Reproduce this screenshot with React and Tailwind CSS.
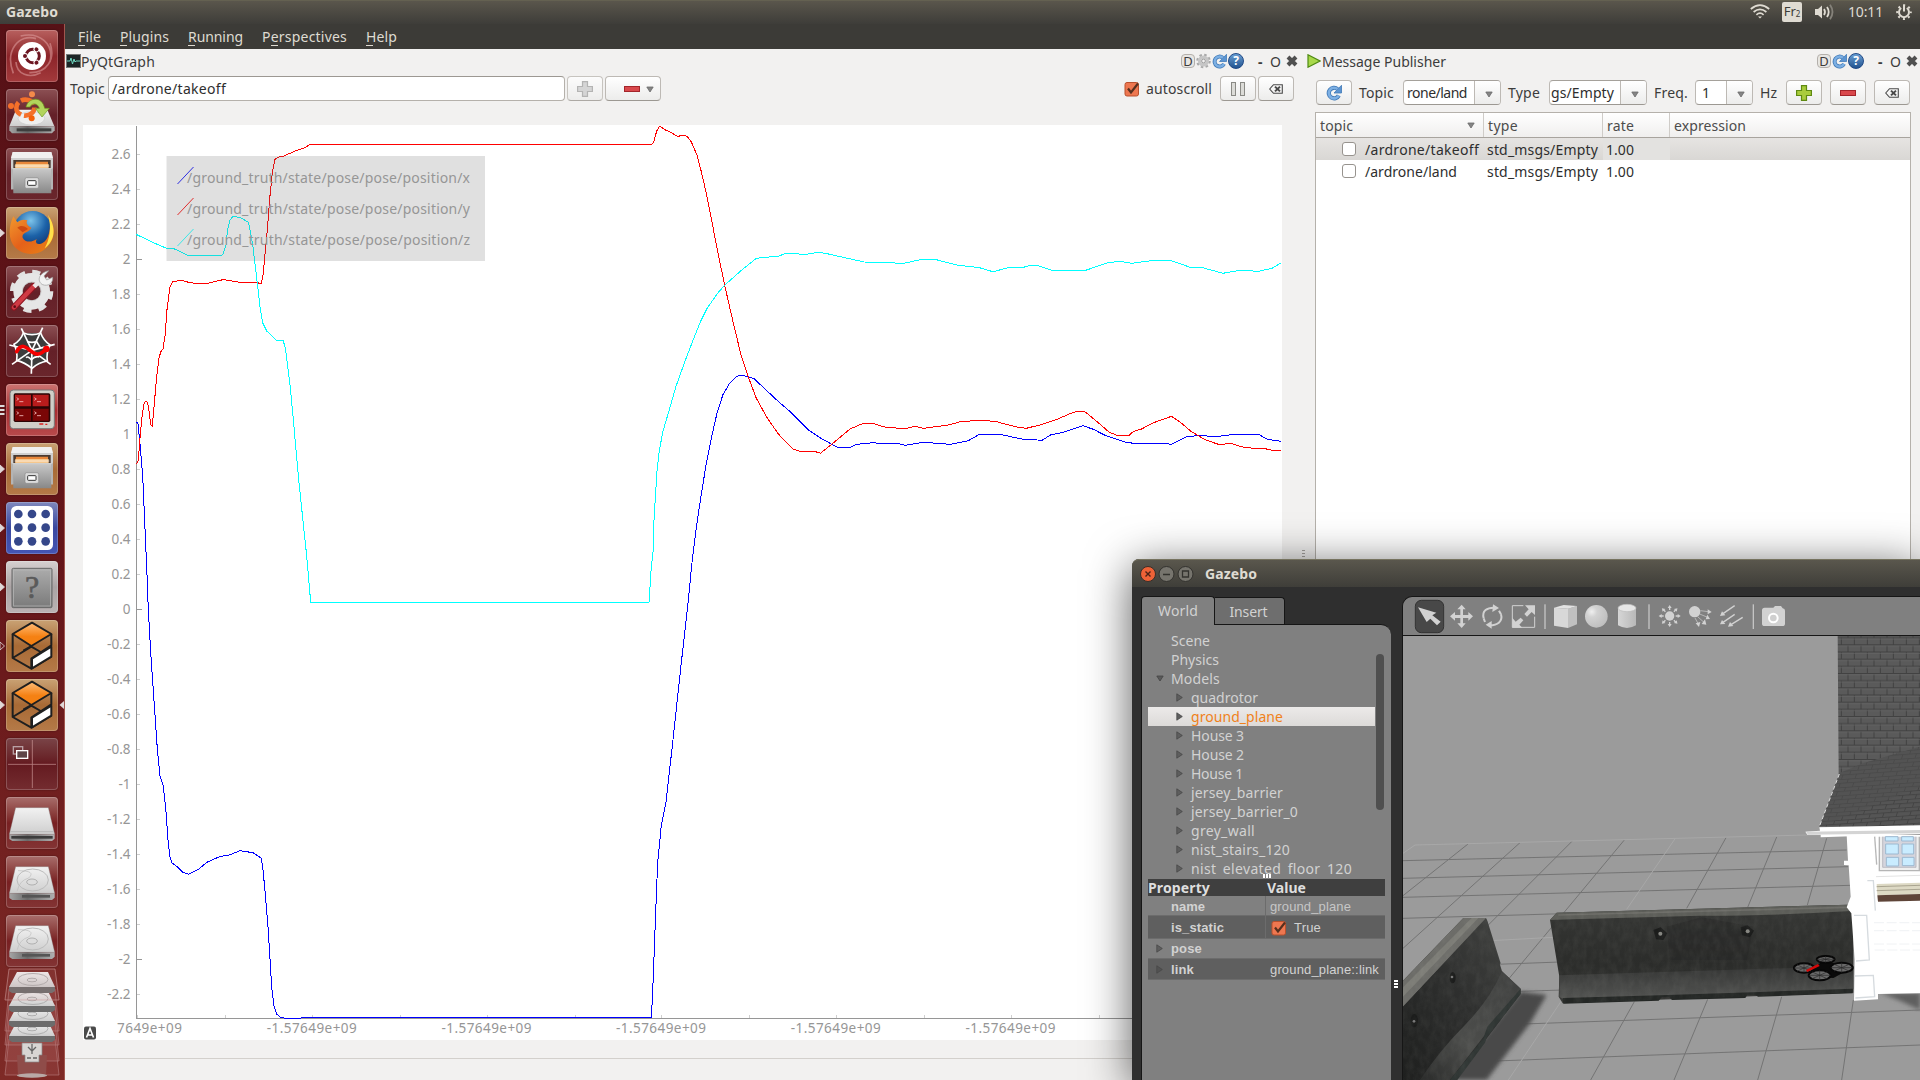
import React, { useLayoutEffect, useRef, useState } from "react";

/* Text run whose tracking is adjusted so that it fills a given width. */
function T({ w, children, className = "" }) {
  const ref = useRef(null);
  const [ls, setLs] = useState(0);
  useLayoutEffect(() => {
    const n = String(children).length;
    const natural = ref.current.getBoundingClientRect().width;
    setLs((w - natural) / n);
  }, []);
  return (
    <span ref={ref} className={"inline-block whitespace-nowrap " + className} style={{ letterSpacing: ls + "px" }}>
      {children}
    </span>
  );
}

/* ---------- launcher ---------- */

const Drive = ({ slot }) => (
  <>
    <path d="M29 32H127L146 112H10Z" fill="url(#metal)" stroke="#8a8a8a" strokeWidth="1" />
    <path d="M10 112H146V125L138 132H19L10 126Z" fill="url(#front)" />
    {slot ? (
      <>
        <path d="M13 104H143" stroke="#aaa" strokeWidth="2" />
        <rect x="16" y="117" width="124" height="8" fill="#3c3c3c" />
      </>
    ) : (
      <>
        <ellipse cx="80" cy="72" rx="47" ry="33" fill="none" stroke="#bbb" strokeWidth="3" />
        <path d="M36 44Q92 44 68 66Q40 74 34 104" fill="none" stroke="#bdbdbd" strokeWidth="2" />
        <ellipse cx="78" cy="78" rx="16" ry="9" fill="#ddd" stroke="#999" strokeWidth="2" />
        <rect x="48" y="117" width="84" height="8" fill="#555" />
      </>
    )}
  </>
);

const Cabinet = () => (
  <>
    <path d="M20 12H136L141 32V124H15V32Z" fill="#cfcfcf" />
    <path d="M20 12H136L141 30H15Z" fill="#f0f0f0" />
    <rect x="22" y="36" width="112" height="24" fill="#4a3a30" />
    <path d="M30 41H126V60H28Z" fill="#e8873a" />
    <path d="M28 48H128V60H28Z" fill="#f6c78c" />
    <path d="M26 54H130" stroke="#fff" strokeWidth="2" />
    <path d="M20 64H136V136H22Z" fill="url(#cab)" />
    <path d="M15 60V124H21V64H135V124H141V60L135 64H21Z" fill="#b4b4b4" />
    <rect x="57" y="89" width="41" height="32" rx="5" fill="#dcdcdc" stroke="#8c8c8c" strokeWidth="2" />
    <rect x="65" y="98" width="25" height="14" rx="2" fill="#fff" stroke="#333" strokeWidth="3" />
  </>
);

const GazeboIcon = () => (
  <g strokeLinejoin="round">
    <path d="M78 8L136 42L76 78L20 42Z" fill="url(#orange)" />
    <path d="M78 8L136 42L76 78L20 42Z" fill="none" stroke="#1f1f1f" strokeWidth="6" />
    <path d="M20 42V114L76 146V116L136 76V42M136 110L76 146M76 78L52 92M20 114L76 80L104 96" fill="none" stroke="#1f1f1f" strokeWidth="6" />
    <path d="M78 116L136 80V110L78 145Z" fill="#fff" stroke="#1f1f1f" strokeWidth="6" />
  </g>
);

const Ring = ({ cx, cy, r, color, sw, head, blob }) => (
  <g transform={`translate(${cx} ${cy})`}>
    <circle r={r} fill="none" stroke={color} strokeWidth={sw} />
    {[0, 120, 240].map((a) => (
      <g key={a} transform={`rotate(${a})`}>
        <circle cx={-r - head * 0.5} cy="0" r={head + 3} fill={blob} />
        <circle cx={-r - head * 0.5} cy="0" r={head} fill={color} />
      </g>
    ))}
  </g>
);

const icons = {
  ubuntu: (
    <>
      <g fill="none" stroke="#e0a0a0" opacity=".55" strokeWidth="5">
        <path d="M22 130C-5 60 40 10 90 26M132 40C150 90 120 130 70 128M44 18C100 5 145 40 132 96" />
        <path d="M30 96C32 134 70 146 104 128" />
      </g>
      <circle cx="78" cy="78" r="42" fill="#fff" />
      <Ring cx={80} cy={78} r={20} color="#6b1520" sw={9} head={6} blob="#fff" />
    </>
  ),
  install: (
    <>
      <path d="M30 62H124L145 112H10Z" fill="url(#metal)" />
      <path d="M10 112H146V124L138 133H18L10 124Z" fill="url(#front)" />
      <rect x="32" y="118" width="104" height="9" fill="#3e3e3e" />
      <ellipse cx="76" cy="88" rx="40" ry="20" fill="#eee" stroke="#ccc" strokeWidth="2" />
      <g transform="translate(58 56)">
        <ellipse rx="27" ry="24" fill="none" stroke="#f4702a" strokeWidth="14" strokeDasharray="44 9" />
        <circle cx="-43" cy="-5" r="9" fill="#f4702a" />
        <circle cx="20" cy="-40" r="9" fill="#f48a4a" />
        <circle cx="19" cy="32" r="9" fill="#f4600a" />
      </g>
      <path d="M60 54C66 26 108 18 116 58H130L108 84L88 58H100C96 42 78 40 72 54Z" fill="#b2d45c" stroke="#6b9a1c" strokeWidth="2" />
    </>
  ),
  cabinet: <Cabinet />,
  firefox: (
    <>
      <circle cx="80" cy="70" r="58" fill="url(#globe)" />
      <path d="M128 26C150 60 148 96 124 120C100 146 56 148 30 124C4 98 8 58 22 28L34 46C42 38 54 36 64 40C58 50 66 58 76 62C70 78 46 74 50 92C58 110 82 104 92 96C82 118 112 116 124 92C134 72 134 46 128 26Z" fill="url(#fox)" />
      <path d="M126 24C150 58 150 100 116 124C130 100 138 60 126 24Z" fill="#ffe14a" />
      <path d="M34 62C44 54 56 56 66 66L50 76Z" fill="#c4380a" opacity=".7" />
    </>
  ),
  settings: (
    <>
      <circle cx="77" cy="76" r="58" fill="none" stroke="#e2e2e2" strokeWidth="14" strokeDasharray="24 21.55" />
      <circle cx="77" cy="76" r="41" fill="none" stroke="#e6e6e6" strokeWidth="28" />
      <circle cx="77" cy="76" r="28" fill="none" stroke="#bcbcbc" strokeWidth="2" />
      <path d="M24 124L84 60" stroke="#8e1420" strokeWidth="19" strokeLinecap="round" />
      <path d="M24 124L82 62" stroke="#cf3a44" strokeWidth="13" strokeLinecap="round" />
      <path d="M84 62L108 38" stroke="#e8e8e8" strokeWidth="13" />
      <path d="M128 14L114 30L122 42L140 34C142 52 126 62 110 56C94 48 94 22 128 14Z" fill="#f2f2f2" stroke="#9a9a9a" strokeWidth="2" />
      <circle cx="26" cy="122" r="4" fill="#5e0c14" />
    </>
  ),
  web: (
    <>
      <path d="M52 24L104 24L132 60L124 108L78 130L32 106L24 58Z" fill="#3c3c3c" />
      <g fill="none" stroke="#fff" strokeWidth="5">
        <path d="M78 76L46 10M78 76L110 8M78 76L146 58M78 76L134 118M78 76L76 146M78 76L18 118M78 76L10 60" />
        <path d="M52 24Q78 34 104 24Q112 46 132 60Q120 84 124 108Q98 112 78 130Q56 112 32 106Q36 80 24 58Q44 46 52 24ZM64 50Q78 54 92 50Q100 62 104 70M60 98Q66 92 76 104Q88 92 100 96" />
      </g>
      <path d="M32 80C46 54 60 66 72 76S98 98 122 70" fill="none" stroke="#f40000" strokeWidth="11" strokeLinecap="round" />
      <circle cx="121" cy="72" r="10" fill="#f40000" />
    </>
  ),
  terminals: (
    <>
      <rect x="12" y="18" width="133" height="116" rx="10" fill="#cfcfc8" stroke="#777" strokeWidth="3" />
      <rect x="23" y="28" width="110" height="86" rx="5" fill="#2a0505" />
      <path d="M27 32H75V67H27ZM80 32H128V67H80Z" fill="#b81c1c" />
      <path d="M27 74H75V110H27ZM80 74H128V110H80Z" fill="#7a0606" />
      <g fill="none" stroke="#f5c0c0" strokeWidth="2.5">
        <path d="M32 41L38 45L32 49M40 53H52M85 41L91 45L85 49M93 53H105M32 83L38 87L32 91M40 95H52M85 83L91 87L85 91M93 95H105" />
      </g>
      <path d="M100 120H112M118 121H124" stroke="#d22" strokeWidth="4" />
    </>
  ),
  dots: (
    <>
      <rect x="15" y="12" width="126" height="132" rx="16" fill="#fff" />
      {[37, 78, 119].map((x) => [36, 77, 118].map((y) => <circle key={x + "-" + y} cx={x} cy={y} r="13" fill="#35478a" />))}
    </>
  ),
  unknown: (
    <>
      <rect x="18" y="22" width="120" height="118" rx="4" fill="url(#unk)" stroke="#666" strokeWidth="3" />
      <rect x="23" y="27" width="110" height="108" fill="none" stroke="#bbb" strokeWidth="2" />
      <text x="78" y="112" textAnchor="middle" fontSize="96" fill="#5a5a5a" stroke="#5a5a5a" strokeWidth="2" fontFamily="Liberation Serif, serif">?</text>
    </>
  ),
  gazebo: <GazeboIcon />,
  workspaces: (
    <>
      <path d="M6 79H150M79 6V150" stroke="#c99" strokeWidth="2.5" opacity=".8" />
      <rect x="22" y="26" width="28" height="22" fill="none" stroke="#b9a0a4" strokeWidth="4" />
      <rect x="32" y="38" width="33" height="23" fill="#5f4548" stroke="#fff" strokeWidth="4" />
    </>
  ),
  slot: <Drive slot />,
  drive: <Drive />,
};

const glassRed = "bg-gradient-to-b from-[#8c5054] via-[#642028] to-[#6a262c]";
const glassLow = "bg-gradient-to-b from-[#a86e6c] via-[#782022] to-[#833434]";
const tan = "bg-gradient-to-b from-[#c9a274] via-[#a86a35] to-[#b57a48]";
const tiles = [
  { icon: "ubuntu", bg: "bg-gradient-to-b from-[#b8605f] via-[#8c2429] to-[#a33a3c]" },
  { icon: "install", bg: glassRed },
  { icon: "cabinet", bg: glassRed },
  { icon: "firefox", bg: tan, pip: "one" },
  { icon: "settings", bg: glassRed },
  { icon: "web", bg: glassRed },
  { icon: "terminals", bg: "bg-gradient-to-b from-[#cc7472] via-[#a82c30] to-[#b84a4c]", pip: "three" },
  { icon: "cabinet", bg: tan, pip: "one" },
  { icon: "dots", bg: "bg-gradient-to-b from-[#8088bc] via-[#3a48a0] to-[#4555b4]", pip: "one" },
  { icon: "unknown", bg: "bg-gradient-to-b from-[#d6d0d0] via-[#aaa3a4] to-[#bbb3b4]", pip: "one" },
  { icon: "gazebo", bg: tan, pip: "hollow" },
  { icon: "gazebo", bg: tan, pip: "one", active: true },
  { icon: "workspaces", bg: "bg-gradient-to-b from-[#7a4448] via-[#641a20] to-[#742c30]" },
  { icon: "slot", bg: glassLow },
  { icon: "drive", bg: glassLow },
  { icon: "drive", bg: glassLow },
];

function Launcher() {
  return (
    <aside className="w-[65px] shrink-0 border-r border-[#a0564e] bg-gradient-to-b from-[#561116] via-[#651519] to-[#7e2a26] pt-[6px]">
      <svg width="0" height="0" className="absolute">
        <defs>
          <linearGradient id="metal" x1="0" y1="0" x2="0" y2="1"><stop offset="0" stopColor="#f2f2f2" /><stop offset="1" stopColor="#cecece" /></linearGradient>
          <linearGradient id="front" x1="0" y1="0" x2="1" y2="0"><stop offset="0" stopColor="#a5a5a5" /><stop offset=".4" stopColor="#6a6a6a" /><stop offset="1" stopColor="#b0b0b0" /></linearGradient>
          <linearGradient id="cab" x1="0" y1="0" x2="0" y2="1"><stop offset="0" stopColor="#c6c6c6" /><stop offset="1" stopColor="#888" /></linearGradient>
          <linearGradient id="unk" x1="0" y1="0" x2="0" y2="1"><stop offset="0" stopColor="#acacac" /><stop offset="1" stopColor="#7a7a7a" /></linearGradient>
          <linearGradient id="orange" x1="0" y1="0" x2="0" y2="1"><stop offset="0" stopColor="#ffbd78" /><stop offset=".6" stopColor="#f58113" /></linearGradient>
          <radialGradient id="globe" cx=".45" cy=".25" r=".8"><stop offset="0" stopColor="#7cc3ea" /><stop offset=".5" stopColor="#1c62a8" /><stop offset="1" stopColor="#0d2b66" /></radialGradient>
          <linearGradient id="fox" x1="0" y1="0" x2="1" y2="1"><stop offset="0" stopColor="#f29a2e" /><stop offset=".5" stopColor="#e4611a" /><stop offset="1" stopColor="#e88416" /></linearGradient>
        </defs>
      </svg>
      <div className="flex flex-col gap-[7px] pl-[6px]">
        {tiles.map((t, i) => (
          <div key={i} className={"relative h-[52px] w-[52px] rounded-[4px] shadow-[inset_0_0_0_1px_rgba(255,255,255,0.2),0_0_2px_rgba(0,0,0,0.4)] " + t.bg}>
            <svg viewBox="0 0 156 156" className="h-[52px] w-[52px]">{icons[t.icon]}</svg>
            {t.pip && (
              <svg className="absolute top-[20px] -left-[6px]" width="5" height="12" viewBox="0 0 5 12">
                {t.pip === "three" ? (
                  <path d="M0 1H4L5 2L4 3H0ZM0 5H4L5 6L4 7H0ZM0 9H4L5 10L4 11H0Z" fill="#ddd" />
                ) : (
                  <path d="M0 2L4.500 6L0 10Z" fill={t.pip === "one" ? "#e0d8d8" : "none"} stroke="#e0d8d8" strokeWidth=".8" />
                )}
              </svg>
            )}
            {t.active && (
              <svg className="absolute top-[20px] left-[53px]" width="5" height="12" viewBox="0 0 5 12"><path d="M5 2L.5 6L5 10Z" fill="#e0d8d8" /></svg>
            )}
          </div>
        ))}
      </div>
      <svg width="64" height="113" viewBox="0 0 64 113">
        {[[34, 64], [50, 78], [66, 94], [84, 108]].reverse().map(([a, b]) => (
          <path key={a} d={`M9 ${a - 12}H55L59 ${b}H5Z`} fill="#b87070" fillOpacity=".2" stroke="#b98080" strokeOpacity=".6" />
        ))}
        <path d="M17 88H47L46 109Q32 112 18 109Z" fill="#8f4c49" />
        <ellipse cx="32" cy="108.500" rx="15" ry="2.200" fill="#b9a9a6" />
        <path d="M22 76H42V88H39V95H25V88H22Z" fill="#d8d5d3" stroke="#888" strokeWidth=".7" />
        <path d="M27 91H31M33 91H37M32 77V87M28 80L32 84L36 80" stroke="#666" strokeWidth="1.300" fill="none" />
        {[0, 19, 34, 49].reverse().map((d) => (
          <g key={d} transform={`translate(0 ${d + 5})`}>
            <path d="M17 0H48L55 15H9Z" fill="url(#metal)" />
            <path d="M9 15H55V19L52 21H12L9 19Z" fill="#6c6c6c" />
            <ellipse cx="33" cy="7.500" rx="15" ry="6" fill="none" stroke="#b0b0b0" />
            <ellipse cx="32" cy="8" rx="5" ry="1.800" fill="#ddd" stroke="#999" strokeWidth=".7" />
          </g>
        ))}
        <path d="M9 2H55L59 33H5Z" fill="#c88" fillOpacity=".12" stroke="#c99" strokeOpacity=".6" />
      </svg>
    </aside>
  );
}

/* ---------- top panel ---------- */

function TopBar() {
  return (
    <header className="flex h-6 shrink-0 items-center justify-between border-t border-[#646151] bg-gradient-to-b from-[#5a564c] to-[#3e3d39] pr-2 pb-[2px] pl-[6px] text-[#dfdbd2]">
      <T w={52} className="text-[14px] font-bold">Gazebo</T>
      <div className="flex h-full items-center">
        <svg width="20" height="15" viewBox="0 0 20 15" fill="none" stroke="#dfdbd2" strokeWidth="1.700">
          <path d="M.8 5Q10-2.600 19.200 5M3.600 8Q10 2.600 16.400 8M6.400 10.800Q10 7.600 13.600 10.800" />
          <path d="M8 12.400H12L10 14.600Z" fill="#dfdbd2" stroke="none" />
        </svg>
        <div className="ml-3 flex h-5 w-5 items-center justify-center rounded-[2px] bg-[#dfdbd2] text-[13px] leading-none text-[#3c3b37]">
          Fr<sub className="text-[8px]">2</sub>
        </div>
        <svg className="ml-3" width="22" height="16" viewBox="0 0 22 16" fill="none" stroke="#dfdbd2" strokeWidth="1.800">
          <path d="M1 5H4L8 1.500V14.500L4 11H1Z" fill="#dfdbd2" stroke="none" />
          <path d="M10 5Q12 8 10 11M13 3Q16.400 8 13 13" />
          <path d="M16 .8Q21 8 16 15.200" stroke="#85827a" />
        </svg>
        <T w={35} className="ml-[12px] text-[14px]">10:11</T>
        <svg className="ml-[13px]" width="16" height="16" viewBox="0 0 16 16" fill="none" stroke="#dfdbd2">
          <path d="M5.200 4A5 5 0 1 0 10.800 4" strokeWidth="2" />
          <circle cx="8" cy="8.200" r="6.800" strokeWidth="2" strokeDasharray="2 3.340" strokeDashoffset="1" />
          <path d="M8 .5V7.500" strokeWidth="2" />
        </svg>
      </div>
    </header>
  );
}

const menus = [
  ["File", 23, "ml-[13px]"],
  ["Plugins", 49, "ml-[19px]"],
  ["Running", 55, "ml-[19px]"],
  ["Perspectives", 85, "ml-[19px]"],
  ["Help", 31, "ml-[19px]"],
];

const MenuBar = () => (
  <nav className="flex h-[25px] shrink-0 items-center bg-[#3c3b37] text-[14px] text-[#dfdbd2]">
    {menus.map(([m, w, ml]) => (
      <div key={m} className={"relative " + ml}>
        <T w={w}>{m}</T>
        <i className={"absolute bottom-[1px] h-px w-[7px] bg-[#dfdbd2] " + (m === "Perspectives" ? "left-[9px]" : "left-0")} />
      </div>
    ))}
  </nav>
);

/* ---------- small widgets ---------- */

const Refresh = ({ s = 16 }) => (
  <svg width={s} height={s} viewBox="0 0 16 16" fill="none">
    <path d="M12.800 10.500A5.300 5.300 0 1 1 11.500 4" stroke="#3f78b5" strokeWidth="4.200" />
    <path d="M15.500 .3V8H8Z" fill="#5b94d2" stroke="#3f78b5" strokeWidth=".8" />
    <path d="M12.800 10.500A5.300 5.300 0 1 1 11.500 4" stroke="#7db0e4" strokeWidth="2.600" />
  </svg>
);

const DockButtons = ({ gear }) => (
  <div className="flex items-center text-[14px] text-[#3c3c3c]">
    <span className="flex h-[14px] w-[14px] items-center justify-center rounded-[4px] border border-[#b4b0ab] bg-[#e8e6e3] text-[13px] leading-none">D</span>
    {gear && (
      <svg className="ml-px" width="15" height="16" viewBox="0 0 16 16" fill="none">
        <circle cx="8" cy="8" r="6.500" stroke="#a9a9a9" strokeWidth="2.500" strokeDasharray="2.600 2.500" />
        <circle cx="8" cy="8" r="4.200" stroke="#c6c6c6" strokeWidth="3.400" />
        <circle cx="8" cy="8" r="2" stroke="#999" />
      </svg>
    )}
    <span className="ml-px"><Refresh s={15} /></span>
    <span className="ml-px flex h-4 w-4 items-center justify-center rounded-full border border-[#204a87] bg-gradient-to-b from-[#6a9fd4] to-[#23548f] text-[12px] leading-none font-bold text-white">?</span>
    <span className="ml-[14px] w-[6px] font-bold">-</span>
    <span className="ml-[6px] w-[12px] text-[14px]">O</span>
    <svg className="ml-[4px]" width="12" height="12" viewBox="0 0 12 12"><path d="M2 2L10 10M10 2L2 10" stroke="#505050" strokeWidth="4" /></svg>
  </div>
);

const btn = "flex shrink-0 items-center justify-center rounded-[4px] border border-[#bdb9b4] border-b-[#9c9892] bg-gradient-to-b from-white to-[#ececeb]";
const Btn = ({ className, children }) => <div className={btn + " h-[25px] " + className}>{children}</div>;

const Clear = () => (
  <svg width="14" height="10" viewBox="0 0 14 10" fill="none" stroke="#4a4a4a">
    <path d="M.7 5L4.500 .7H13.300V9.300H4.500Z" strokeWidth="1.100" />
    <path d="M6 2.600L11 7.400M11 2.600L6 7.400" strokeWidth="2" />
  </svg>
);
const Plus = ({ grey }) => (
  <svg width="16" height="16" viewBox="0 0 16 16">
    <path d="M5.500 .6H10.500V5.500H15.400V10.500H10.500V15.400H5.500V10.500H.6V5.500H5.500Z" fill={grey ? "#cfcfcf" : "#a9cc3c"} stroke={grey ? "#a5a5a5" : "#5f8a12"} strokeWidth="1.200" />
  </svg>
);
const Minus = () => <i className="h-[6px] w-[16px] shrink-0 border border-[#a3252a] bg-[#d9484c]" />;
const Down = ({ dark }) => <svg width="8" height="7" viewBox="0 0 8 7"><path d="M.8 1H7.200L4 6Z" fill={dark ? "#5a5a5a" : "#858585"} stroke={dark ? "#444" : "#6a6a6a"} strokeWidth=".8" /></svg>;
const Check = () => (
  <svg width="16" height="16" viewBox="0 0 16 16">
    <rect x="1" y="1.500" width="13.500" height="13.500" rx="2" fill="#ee7750" stroke="#b9502d" />
    <path d="M4 7.500L7 11.500L14 2.500" fill="none" stroke="#57301f" strokeWidth="2.200" />
  </svg>
);
const Combo = ({ text, tw, wide, ml, arrow = "w-[26px]", pad }) => (
  <div className={"flex h-[25px] shrink-0 overflow-hidden rounded-[4px] border border-[#bdb9b4] border-t-[#a5a19b] border-b-[#9c9892] bg-white " + wide + " " + ml}>
    <div className={"flex flex-1 items-center overflow-hidden text-[#2e2e2e] " + pad}><T w={tw}>{text}</T></div>
    <div className={"flex items-center justify-center border-l border-[#bdb9b4] bg-gradient-to-b from-white to-[#ececeb] pt-[3px] pl-[2px] " + arrow}><Down /></div>
  </div>
);

/* ---------- plot ---------- */

const cyan = "136.500,234.500 153,242.500 166.500,248.300 173.500,248.500 188,255.500 220.500,256 223,254 226,245 227.500,230 230,220 233,216.300 241,217.800 248.500,222.500 250.600,233 253,247 257.300,283 260,307 262.700,323 266.700,331 276.700,340.700 283.300,340.700 285.700,350 290,384.600 293.300,419.400 298.300,475.700 303.300,523.900 306.700,556 310.700,602.500 649,602.500 651.300,566.700 653,553 653.600,526.700 655.400,496.700 657.100,470 659,453 662.500,433 669.200,410 675.900,386.700 684.800,361.700 693.800,338.300 700.400,321.700 707.100,308.300 718.300,292.300 725,285 740.600,271 756.300,258.300 779.500,256 785.300,253.300 795.500,253.300 803,255 817.400,252.300 825.400,253.300 844.600,257.700 864.300,262 903.600,263.300 922.300,259.300 934.800,259.300 957,265 979.500,267.700 992.900,271.700 1008.500,267.700 1021.900,267.700 1030.800,265.300 1036.600,265.300 1053,270.700 1085.700,270.300 1106.700,263 1120,261.300 1131.300,263.300 1151.300,260.700 1171.400,260.700 1189.300,267 1202.700,267.700 1222.800,273.300 1240.600,270.300 1258.500,271.300 1271.900,268.300 1280.800,263";
const red = "136.700,463.900 138.300,460.700 140,438 142.300,414 144.300,402.800 146,401 147.700,403 149.300,412.500 150.700,424.800 152.300,425.900 154.300,403.400 156.700,376.600 159,357.800 161,351.400 163,348.700 165,336.400 167,309.600 170,287 172.700,281.800 181.700,280.200 190,282.800 205,283.900 223.300,279.600 240,282.300 256.700,282.300 261,283.900 262.700,277.500 263.700,268.300 267.300,230 270.200,193.300 272.700,170 275,159.300 277.600,157.300 283.700,156 296,150.700 304,148 310.200,144.500 651.300,144.500 653.600,142.300 656.700,131 659.800,126 664.700,129.700 669.200,131.300 677.200,136.300 683.500,135.500 687,136.300 691.500,142.300 696.900,155 700.900,170 706.300,193.300 711.600,220 717,248.300 725,286.700 732.600,320 740.600,353.300 748.200,376.700 756.300,398.300 767.400,418.300 778.600,434.300 793.300,449 798.700,451 814.300,451.300 820.500,453.300 832,444 850,429 863.400,423.300 874.600,424 885.700,427.300 905.800,428.700 914.700,426.300 923.700,428.300 948.200,425 959.400,422 977.200,420.300 995,421.300 1015.200,426.700 1026.300,428.300 1039.700,425 1055.400,420 1071,413.300 1077.700,411.300 1084.400,411.300 1095.500,420.300 1108.900,432 1117,435.300 1129,435.300 1133.500,431.300 1141,429.300 1153.600,422.700 1171.400,416.300 1180.400,422.300 1191.500,431.700 1205,439.700 1218.300,444.300 1231.700,443.700 1245,447.700 1265.200,448.700 1271.900,450.300 1280.800,450.300";
const blue = "136.700,422 138,423.700 140,443.500 142.700,475.700 144.300,513.200 146.700,566.700 148.300,609.600 150.700,652.400 154,700.600 157.300,748.800 160,775.600 163.300,786.300 165.700,807.800 168,839.900 170,857 172,862.900 178.300,867.700 183.300,872.600 189,874.200 198.300,869.400 206.700,862.400 220,856.500 230,854.900 240,850.600 253.300,852.800 261,858 262.700,866.700 265,890.800 268.300,930.900 271.700,987.200 274,1006 276.700,1014 280,1017.200 285,1018.300 298,1018.300 306.700,1017.500 651.400,1017.500 652.700,992 655,930.600 657.600,863.300 661.200,826.500 666,802 672.200,747 680.800,667.300 688.400,600 691.500,566.700 696,530 700.400,500 706.300,463.300 711.600,436.700 717,413.300 722.800,395 729.500,383.300 736.200,376.700 740.600,375.300 747.300,376.300 754,378.700 778.600,401.700 792,413.300 807.600,429.300 821,438.300 836.600,447 850,447.300 856.700,444.300 873.200,442.700 885.700,444 899,443.700 905,445.300 923.700,442.300 950.400,444.300 968.300,440.700 979.500,434.300 999.600,434.300 1021.900,439 1042,440.300 1051,434.700 1062,432.700 1083,425.700 1093.300,429.300 1104.500,435 1124.600,442 1133.500,443.300 1162.500,443.300 1171.400,444.300 1187,436.700 1200.400,435.300 1216,437 1225,435.300 1238.400,434.300 1258.500,434.300 1267.400,439.300 1280.800,441.300";

const yTicks = Array.from({ length: 25 }, (_, i) => (13 - i) / 5);
const legend = [["x", "#0000e0"], ["y", "#e00000"], ["z", "#10e8e8"]];

function Plot() {
  return (
    <svg width="1199" height="915" viewBox="83 125 1199 915" className="block bg-white" fontFamily='"Noto Sans", sans-serif' fontSize="13.500">
      <g stroke="#969696" shapeRendering="crispEdges">
        <path d="M136.500 126V1018.500H1282" fill="none" />
        {yTicks.map((v) => (
          <path key={v} d={`M137 ${Math.floor(609.3 - v * 175) + 0.5}h${v % 2 === 0 ? 5 : 3}`} stroke={v % 2 === 0 ? "#969696" : "#cfcfcf"} />
        ))}
        {[137, 225, 312, 400, 487, 575, 661, 749, 836, 924, 1011, 1099].map((x) => <path key={x} d={`M${x}.500 1018v-3`} stroke="#cfcfcf" />)}
      </g>
      <g fill="#969696">
        {yTicks.map((v) => <text key={v} x="130.500" y={614 - v * 175} textAnchor="end">{String(v)}</text>)}
        <text x="117" y="1033" textLength="65">7649e+09</text>
        {[311.7, 486.5, 661, 835.7, 1010.5].map((x) => <text key={x} x={x - 45} y="1033" textLength="90">-1.57649e+09</text>)}
      </g>
      <g fill="none" shapeRendering="crispEdges">
        <polyline points={blue} stroke="#0000ff" />
        <polyline points={red} stroke="#ff0000" />
        <polyline points={cyan} stroke="#00ffff" />
      </g>
      <rect x="166.500" y="156" width="318.500" height="105" fill="rgb(100,100,100)" fillOpacity=".2" />
      {legend.map(([n, c], i) => (
        <g key={n}>
          <path d={`M177.500 ${184 + i * 31}L193.500 ${167 + i * 31}`} stroke={c} strokeWidth=".8" />
          <text x="187" y={183 + i * 31} fill="#969696" fontSize="14" textLength="283">{"/ground_truth/state/pose/pose/position/" + n}</text>
        </g>
      ))}
      <rect x="84" y="1026.500" width="12" height="13" rx="2" fill="#4a4a4a" />
      <path d="M86.500 1037.500L90 1028.500L93.500 1037.500M88 1035H92" fill="none" stroke="#fff" strokeWidth="1.600" />
    </svg>
  );
}

function PlotDock() {
  return (
    <section className="w-[1229px] shrink-0">
      <div className="flex h-[25px] items-center justify-between pb-px pl-px text-[14px]">
        <div className="flex items-center">
          <svg width="15" height="14" viewBox="0 0 15 14">
            <rect x=".5" y=".5" width="14" height="13" fill="#1c2526" stroke="#777" />
            <path d="M1 7H4L5 4L6.500 10L8 5L9 8L10 7H14" stroke="#6fd8c0" fill="none" />
          </svg>
          <T w={74}>PyQtGraph</T>
        </div>
        <div className="-mr-[4px]"><DockButtons gear /></div>
      </div>
      <div className="flex items-center pt-[2px] pl-[5px] text-[14px]">
        <T w={35}>Topic</T>
        <div className="ml-[3px] flex h-[25px] w-[457px] items-center rounded-[4px] border border-[#b5b1ab] border-t-[#9c9892] bg-white pl-[3px] text-[#2e2e2e]">
          <T w={114}>/ardrone/takeoff</T>
        </div>
        <Btn className="ml-[2px] w-[36px] opacity-80"><Plus grey /></Btn>
        <Btn className="ml-[2px] w-[56px] gap-[6px] pt-px pl-[12px]"><Minus /><Down /></Btn>
        <div className="ml-auto flex items-center">
          <span className="mr-[6px]"><Check /></span>
          <T w={66}>autoscroll</T>
          <Btn className="ml-[8px] w-[36px] gap-1">
            <i className="h-[14px] w-[5px] border border-[#8a8a85] bg-[#dcdcd8]" />
            <i className="h-[14px] w-[5px] border border-[#8a8a85] bg-[#dcdcd8]" />
          </Btn>
          <Btn className="ml-[2px] w-[36px]"><Clear /></Btn>
        </div>
      </div>
      <div className="pt-[24px] pl-[18px]"><Plot /></div>
    </section>
  );
}

/* ---------- message publisher ---------- */

const rows = [
  ["/ardrone/takeoff", 114, "bg-gradient-to-b from-[#e6e4e2] to-[#d9d7d4]"],
  ["/ardrone/land", 92, ""],
];

function Publisher() {
  return (
    <section className="flex flex-1 flex-col">
      <div className="flex h-[25px] items-center justify-between pr-[2px] pb-px text-[14px]">
        <div className="flex items-center">
          <svg width="14" height="14" viewBox="0 0 14 14"><path d="M1 .8L13 7L1 13.200Z" fill="#a8d84a" stroke="#4e8a12" strokeWidth="1.200" /></svg>
          <T w={124} className="ml-px">Message Publisher</T>
        </div>
        <DockButtons />
      </div>
      <div className="flex items-center pt-[6px] pl-[9px] text-[14px]">
        <Btn className="w-[36px]"><Refresh /></Btn>
        <T w={35} className="ml-[7px]">Topic</T>
        <Combo text="rone/land" tw={60} wide="w-[98px]" ml="ml-[9px]" pad="pl-[3px]" />
        <T w={32} className="ml-[7px]">Type</T>
        <Combo text="gs/Empty" tw={63} wide="w-[98px]" ml="ml-[9px]" pad="pl-[1px]" />
        <T w={34} className="ml-[7px]">Freq.</T>
        <Combo text="1" tw={8} wide="w-[58px]" ml="ml-[7px]" pad="pl-[6px]" />
        <T w={17} className="ml-[7px]">Hz</T>
        <Btn className="ml-[9px] w-[36px]"><Plus /></Btn>
        <Btn className="ml-[8px] w-[36px]"><Minus /></Btn>
        <Btn className="ml-[8px] w-[36px]"><Clear /></Btn>
      </div>
      <div className="mt-[7px] mr-[9px] mb-[30px] ml-[8px] flex-1 border border-[#b5b1ab] bg-white text-[14px]">
        <div className="grid h-[25px] grid-cols-[168px_119px_67px_1fr] border-b border-[#a8a49e] bg-gradient-to-b from-white to-[#f0efee] text-[#4c4c4c]">
          <div className="flex items-center justify-between border-r border-[#cfccc8] pr-[8px] pl-1"><T w={33}>topic</T><Down /></div>
          <div className="flex items-center border-r border-[#cfccc8] pl-1"><T w={30}>type</T></div>
          <div className="flex items-center border-r border-[#cfccc8] pl-1"><T w={27}>rate</T></div>
          <div className="flex items-center pl-1"><T w={72}>expression</T></div>
        </div>
        {rows.map(([topic, w, bg], i) => (
          <div key={topic} className={"grid h-[22px] grid-cols-[168px_119px_67px_1fr] items-center text-[#2e2e2e] " + bg}>
            <div className="flex items-center pl-[26px]">
              <i className="h-[14px] w-[14px] rounded-[3px] border border-[#97938e] bg-white" />
              <T w={w} className="ml-[9px]">{topic}</T>
            </div>
            <div className="flex items-center pl-[3px]"><T w={111}>std_msgs/Empty</T></div>
            <div className={"flex h-full items-center pl-[3px] " + (i === 0 ? "bg-[#e3e2e0]" : "")}><T w={28}>1.00</T></div>
            <span />
          </div>
        ))}
      </div>
    </section>
  );
}

/* ---------- Gazebo window ---------- */

const tree = [
  ["Scene", 39, 0, ""], ["Physics", 48, 0, ""], ["Models", 49, 0, "open"],
  ["quadrotor", 67, 1, "closed"], ["ground_plane", 92, 1, "closed"], ["House 3", 53, 1, "closed"],
  ["House 2", 53, 1, "closed"], ["House 1", 52, 1, "closed"], ["jersey_barrier", 92, 1, "closed"],
  ["jersey_barrier_0", 107, 1, "closed"], ["grey_wall", 64, 1, "closed"],
  ["nist_stairs_120", 99, 1, "closed"], ["nist_elevated_floor_120", 161, 1, "closed"],
];
const Right = ({ dim }) => <svg width="7" height="9" viewBox="0 0 7 9"><path d="M.8 .8V8.200L6.300 4.500Z" fill={dim ? "#525252" : "#5e5e5e"} stroke="#474747" strokeWidth=".8" /></svg>;

function Sidebar() {
  return (
    <div className="w-[250px] shrink-0 pt-[9px] text-[#d2d2d2]">
      <div className="flex h-[28px] items-end text-[14px]">
        <div className="relative -mb-px flex h-[29px] w-[74px] items-center justify-center rounded-t-[4px] border border-b-0 border-[#161616] bg-[#808080] pb-px"><T w={40}>World</T></div>
        <div className="flex h-[27px] w-[70px] items-center justify-center rounded-tr-[4px] border border-b-0 border-l-0 border-[#161616] bg-[#6e6e6e] pr-[2px]"><T w={38}>Insert</T></div>
      </div>
      <div className="h-[457px] rounded-tr-[10px] border-t border-l border-[#161616] bg-[#808080] pt-[6px] pl-[6px]">
        <div className="flex h-[243px] overflow-hidden">
          <div className="w-[227px]">
            {tree.map(([n, w, lvl, arrow]) => (
              <div key={n} className={"flex h-[19px] items-center text-[14px] " + (lvl ? "pl-[28px] " : "pl-[8px] ") + (n === "ground_plane" ? "bg-gradient-to-b from-[#eceae9] to-[#dcdad8] text-[#f0811a]" : "")}>
                <span className="flex w-[15px] items-center">
                  {arrow === "closed" && <Right />}
                  {arrow === "open" && <Down dark />}
                </span>
                <T w={w}>{n}</T>
              </div>
            ))}
          </div>
          <div className="mt-[23px] ml-px h-[156px] w-[8px] rounded-full bg-[#4f4f4f]" />
        </div>
        <div className="ml-[115px] flex h-[5px] w-[8px] gap-px"><i className="h-1 w-[2px] bg-white" /><i className="h-1 w-[2px] bg-white" /><i className="h-1 w-[2px] bg-white" /></div>
        <div className="w-[237px] text-[13px]">
          <div className="flex h-[17px] items-center bg-[#3f3f3f] text-[14px] font-bold text-[#dedede]">
            <div className="w-[119px]"><T w={62}>Property</T></div><T w={39}>Value</T>
          </div>
          <div className="grid grid-cols-[118px_1fr] font-['Liberation_Sans',Arial,sans-serif]">
            <div className="flex h-[20px] items-center border-r border-b border-[#6c6c6c] pt-[2px] pl-[23px] font-bold"><T w={34}>name</T></div>
            <div className="flex h-[20px] items-center border-b border-[#6c6c6c] pt-[2px] pl-[4px] text-[#c6c6c6]"><T w={81}>ground_plane</T></div>
            <div className="flex h-[23px] items-center border-r border-b border-[#6c6c6c] bg-[#5f5f5f] pt-px pl-[23px] font-bold"><T w={53}>is_static</T></div>
            <div className="flex h-[23px] items-center border-b border-[#6c6c6c] bg-[#5f5f5f] pt-px pl-[5px]"><Check /><T w={27} className="ml-[7px]">True</T></div>
            <div className="flex h-[20px] items-center border-b border-[#6c6c6c] pl-[8px] font-bold"><span className="w-[15px]"><Right /></span><T w={31}>pose</T></div>
            <div className="h-[20px] border-b border-[#6c6c6c]" />
            <div className="flex h-[21px] items-center border-b border-[#6c6c6c] bg-[#5f5f5f] pt-px pl-[8px] font-bold"><span className="w-[15px]"><Right dim /></span><T w={23}>link</T></div>
            <div className="flex h-[21px] items-center border-b border-[#6c6c6c] bg-[#5f5f5f] pt-px pl-[4px]"><T w={109}>ground_plane::link</T></div>
          </div>
        </div>
      </div>
    </div>
  );
}

/* Toolbar glyphs share one strip so their spacing stays fixed. */
function Toolbar() {
  const rays = [0, 45, 90, 135, 180, 225, 270, 315];
  return (
    <div className="h-[39px] rounded-tl-[10px] border-t border-l border-[#161616] bg-[#808080]">
      <svg width="398" height="37" viewBox="24 21 1194 111" fill="#d2d2d2">
        <defs>
          <radialGradient id="ball" cx=".3" cy=".3" r=".8"><stop offset="0" stopColor="#efefef" /><stop offset=".3" stopColor="#d2d2d2" /><stop offset="1" stopColor="#bdbdbd" /></radialGradient>
          <linearGradient id="cyl"><stop offset="0" stopColor="#d6d6d6" /><stop offset="1" stopColor="#b8b8b8" /></linearGradient>
        </defs>
        <rect x="61" y="31" width="85" height="97" rx="18" fill="#484848" stroke="#333" strokeWidth="3" />
        <path d="M69 52L124 68L112 76L137 95L126 106L106 86L95 96Z" />
        <path d="M200 44L212 58H204V75H220V66L234 79L220 92V84H204V100H212L200 114L187 100H196V84H180V92L165 79L180 66V75H196V58H187Z" />
        <g fill="none" stroke="#d2d2d2" strokeWidth="6">
          <path d="M266 85C260 62 276 52 300 53M318 73C324 94 308 106 284 106" />
          <path d="M266 85L270 96M318 73L312 62" />
        </g>
        <path d="M294 43L312 54L292 66ZM290 93L272 104L290 116Z" />
        <path d="M385 47H352V112H419V80" fill="none" stroke="#d2d2d2" strokeWidth="3" />
        <path d="M390 46H420V75L410 66L396 80L388 72L401 58ZM352 83V113H382L373 104L385 91L377 83L362 95Z" />
        <g fill="#c4c4c4"><rect x="448" y="43" width="4" height="74" /><rect x="760" y="43" width="4" height="74" /><rect x="1073" y="43" width="4" height="74" /></g>
        <path d="M477 53L519 56V114L477 107Z" fill="#d8d8d8" /><path d="M519 56L546 48V103L519 114Z" fill="#c0c0c0" /><path d="M477 53L506 45L546 48L519 56Z" fill="#e2e2e2" />
        <circle cx="604" cy="79" r="34" fill="url(#ball)" />
        <path d="M669 54V106Q696 122 723 106V54Z" fill="url(#cyl)" /><ellipse cx="696" cy="54" rx="27" ry="11" fill="#e6e6e6" stroke="#bbb" strokeWidth="2" />
        <circle cx="824" cy="78" r="14" />
        {rays.map((a) => <path key={a} transform={`rotate(${a} 824 78)`} d="M822 60V54H818L824 45L830 54H826V60Z" />)}
        <circle cx="899" cy="65" r="17" />
        <g stroke="#d2d2d2" strokeWidth="2" fill="none"><path d="M916 62L940 65M914 72L938 82M908 80L928 98M900 84L910 102" /></g>
        <path d="M938 58L950 66L938 73ZM937 74L945 87L932 88ZM930 88L934 104L920 102ZM916 96L912 111L902 100Z" />
        <g stroke="#d2d2d2" strokeWidth="4"><path d="M1019 47L984 71M1019 73L984 97M1043 82L1008 104" /></g>
        <path d="M975 78L981 64L991 76ZM975 103L981 90L991 102ZM999 110L1005 96L1015 108Z" />
        <path d="M1109 53H1135L1140 48H1158L1163 55Q1170 56 1170 62V101Q1170 108 1162 108H1109Q1101 108 1101 101V61Q1101 53 1109 53Z" />
        <circle cx="1135" cy="84" r="13" fill="#cfcfcf" stroke="#fff" strokeWidth="6" />
      </svg>
    </div>
  );
}

const barrierFace = "M450 870L470 848L1345 824L1360 850V1088L488 1120L476 1100L478 1040Z";
const leftFace = "M9 1052L190 864H258L306 1024L362 1076V1092L172 1350H9Z";

function Scene() {
  return (
    <svg width="517" height="444" viewBox="9 18 1551 1332" preserveAspectRatio="none" className="block bg-[#9b9b9b]">
      <defs>
        <pattern id="brick" width="39" height="43" patternUnits="userSpaceOnUse">
          <rect width="39" height="43" fill="#5a5a5a" />
          <path d="M0 1.500H39M0 23H39M18 2V23M37 23V43" stroke="#414141" strokeWidth="3" fill="none" />
          <path d="M0 5H39M0 27H39" stroke="#666" strokeWidth="2" />
        </pattern>
        <pattern id="brick2" width="40" height="25" patternUnits="userSpaceOnUse" patternTransform="skewX(-18) skewY(-4)">
          <rect width="40" height="25" fill="#555" />
          <path d="M0 1H40M0 13H40M10 1V13M30 13V25" stroke="#404040" strokeWidth="2.500" fill="none" />
        </pattern>
        <linearGradient id="wall" x1="0" y1="0" x2="0" y2="1"><stop offset="0" stopColor="#363735" /><stop offset=".6" stopColor="#2b2c2a" /><stop offset="1" stopColor="#353634" /></linearGradient>
        <linearGradient id="foot" x1="0" y1="0" x2="0" y2="1"><stop offset="0" stopColor="#343534" /><stop offset="1" stopColor="#525351" /></linearGradient>
        <linearGradient id="wall2" x1="1" y1="0" x2="0" y2="1"><stop offset="0" stopColor="#454644" /><stop offset=".5" stopColor="#2e2f2e" /><stop offset="1" stopColor="#1e1f1e" /></linearGradient>
        <linearGradient id="foot2" x1="1" y1="0" x2="0" y2="1"><stop offset="0" stopColor="#3f403f" /><stop offset=".6" stopColor="#4c4d4b" /><stop offset="1" stopColor="#2a2b2a" /></linearGradient>
        <filter id="soft"><feGaussianBlur stdDeviation="6" /></filter>
        <filter id="grain" x="0" y="0" width="1" height="1">
          <feTurbulence type="fractalNoise" baseFrequency=".05 .03" numOctaves="4" seed="4" />
          <feColorMatrix values="0 0 0 0 .75  0 0 0 0 .75  0 0 0 0 .7  1.200 0 0 0 -.4" />
          <feComposite in2="SourceGraphic" operator="in" />
        </filter>
      </defs>
      <g stroke="#747474" strokeWidth="3" fill="none">
        <path d="M9 692L1340 660M9 745L1345 710M9 802L1350 766M9 865L1350 826M290 1003L480 996M360 1084L490 1080M370 1182L1560 1140M235 1295L1560 1245" />
        <path d="M204 642L9 797M360 638L9 955M516 634L260 890M673 630L300 1078M978 623L860 835M703 1115L572 1350M1130 621L1043 832M923 1108L822 1350M1280 625L1222 825M1145 1100L1073 1350M1360 1110L1325 1350" />
        <path d="M9 670L45 645L1340 612M826 625L680 838M486 1110L325 1350M270 932L460 922" stroke="#a8a8a8" />
      </g>
      <path d="M362 1085L440 1095L390 1180L260 1350H150Z" fill="#484848" filter="url(#soft)" />
      <path d="M1440 1088H1560V1140L1500 1112Z" fill="#5e5e5e" filter="url(#soft)" />

      <path d="M9 1052L190 864H258L262 872L302 1000L9 1290Z" fill="url(#wall2)" />
      <path d="M9 1052L190 864H258L9 1130Z" fill="#6c6c68" />
      <path d="M9 1072L215 864H235L9 1100Z" fill="#7c7c76" />
      <path d="M258 866L306 1024L362 1076L362 1092L165 1350H9V1130Z" fill="url(#wall2)" />
      <path d="M306 1024L362 1076L150 1350H60Q120 1260 190 1190Q270 1110 306 1024Z" fill="url(#foot2)" />
      <path d="M362 1076V1092L270 1210L262 1218L255 1238L172 1350H150L250 1225L262 1190Z" fill="#303634" />
      <g fill="#1c1d1c"><ellipse cx="158" cy="1043" rx="9" ry="17" /><ellipse cx="43" cy="1172" rx="11" ry="20" /></g>
      <g fill="#777"><circle cx="156" cy="1041" r="4" /><circle cx="42" cy="1174" r="4" /></g>
      <path d={leftFace} filter="url(#grain)" opacity=".09" />

      <path d={barrierFace} fill="url(#wall)" />
      <path d="M450 870L470 848L1345 824L1355 843Q1100 858 900 857L520 868Z" fill="#5c5d58" />
      <path d="M475 855L1340 832" stroke="#6d6d68" strokeWidth="5" />
      <path d="M478 1036L1360 1008V1078L1080 1090L780 1098L488 1106L478 1100Z" fill="url(#foot)" />
      <path d="M488 1104L780 1096L1080 1086L1358 1076V1090L1074 1100L1066 1094H1042L1036 1104L816 1110L808 1102H785L776 1112L490 1121Z" fill="#242725" />
      <path d="M800 890L905 862L1060 890L1040 990H810Z" fill="#222" opacity=".35" />
      <g fill="#1b1c1b"><path d="M760 900L782 892L802 910L790 930L768 928ZM1022 892L1042 886L1062 902L1050 922L1026 916Z" /></g>
      <g fill="#858580"><circle cx="781" cy="911" r="6" /><circle cx="1043" cy="904" r="6" /></g>
      <path d={barrierFace} filter="url(#grain)" opacity=".09" />

      <path d="M1313 18H1560V380L1316 432Z" fill="url(#brick)" />
      <path d="M1318 430L1390 400L1560 350V590H1258Z" fill="url(#brick2)" />
      <path d="M1318 430L1390 400L1560 350V470L1258 590Z" fill="#515151" opacity=".45" />
      <path d="M1318 432L1258 590" stroke="#ddd" strokeWidth="3" strokeDasharray="12 7" />
      <path d="M1340 615H1560V1090L1434 1092V1108L1362 1112L1364 990L1354 850L1340 832L1352 800L1346 706L1332 705V692H1344Z" fill="#fff" />
      <path d="M1258 592L1560 586V612L1262 622V614L1222 614L1216 605L1260 602Z" fill="#fff" />
      <path d="M1218 605L1560 600V610L1224 614Z" fill="#d4d4d4" />
      <g>
        <path d="M1424 620L1430 704" stroke="#b8b8b8" strokeWidth="4" />
        <path d="M1438 620V722H1558V620" fill="#efefef" stroke="#b5b5b5" strokeWidth="4" />
        <path d="M1448 620V712H1548V620" fill="#d5d5dd" stroke="#a8a8b0" strokeWidth="2" />
        <path d="M1456 620H1494V633H1456ZM1505 620H1540V633H1505ZM1457 642H1495V672H1457ZM1506 642H1541V672H1506ZM1459 682H1496V708H1459ZM1507 682H1542V707H1507Z" fill="#c9ecff" stroke="#9cb8d0" strokeWidth="3" />
        <path d="M1428 740L1560 736" stroke="#e3e3e3" strokeWidth="3" />
        <path d="M1430 762L1560 758V792L1432 796Z" fill="#ddd9c4" />
        <path d="M1430 770L1560 766M1430 782L1560 778" stroke="#a9a490" strokeWidth="3" />
        <path d="M1432 796L1560 792V812L1434 815Z" fill="#5e4438" />
        <path d="M1402 752H1420L1426 842M1362 856H1400L1408 990L1368 993M1364 1038L1420 1036L1424 1100L1366 1104" fill="none" stroke="#d6dbdf" strokeWidth="4" />
        <path d="M1422 878H1560M1422 902H1560M1422 942H1560M1424 960H1560" stroke="#e9ecee" strokeWidth="2" strokeDasharray="30 8" />
      </g>

      <g>
        <path d="M1240 1014L1270 992L1320 1004L1360 1012L1300 1044L1250 1040Z" fill="#0a0a0a" />
        {[[1277, 988, 27, 10], [1212, 1014, 30, 14], [1325, 1013, 33, 15], [1259, 1036, 33, 15]].map(([x, y, a, b]) => (
          <g key={x}>
            <ellipse cx={x} cy={y} rx={a} ry={b} fill="#6a6a6a" stroke="#070707" strokeWidth="6" />
            <path d={`M${x - a} ${y}H${x + a}M${x - a * 0.7} ${y - b * 0.7}L${x + a * 0.7} ${y + b * 0.7}M${x - a * 0.7} ${y + b * 0.7}L${x + a * 0.7} ${y - b * 0.7}M${x} ${y - b}V${y + b}`} stroke="#2a2a2a" strokeWidth="2" />
          </g>
        ))}
        <path d="M1218 1020L1254 1002L1259 1008L1222 1026Z" fill="#d40808" />
      </g>
    </svg>
  );
}

function GazeboWindow() {
  return (
    <div className="absolute top-[559px] left-[1132px] flex h-[521px] w-[788px] flex-col overflow-visible rounded-tl-[7px] bg-[#2f2f2f] shadow-[0_8px_46px_0_rgba(0,0,0,0.65)]">
      <div className="flex h-[28px] shrink-0 items-center rounded-tl-[7px] border-t border-[#76735f] bg-gradient-to-b from-[#5a574d] to-[#3f3e39] pl-[8px]">
        <svg width="54" height="18" viewBox="0 0 54 18" fill="none">
          <circle cx="8" cy="9" r="7.500" fill="#ee6237" stroke="#3a2e28" />
          <circle cx="26.500" cy="9" r="7.500" fill="#76746d" stroke="#33322e" />
          <circle cx="45.500" cy="9" r="7.500" fill="#76746d" stroke="#33322e" />
          <path d="M5.500 6.500L10.500 11.500M10.500 6.500L5.500 11.500" stroke="#4a2317" strokeWidth="1.400" />
          <path d="M23 9.500H30M42.500 6H48.500V12H42.500Z" stroke="#33322e" strokeWidth="1.300" />
        </svg>
        <T w={52} className="ml-[11px] text-[14px] font-bold text-[#dfdbd2]">Gazebo</T>
      </div>
      <div className="flex h-[493px] pl-[9px]">
        <Sidebar />
        <div className="flex w-[11px] flex-col items-start gap-px pt-[393px] pl-[3px]">
          <i className="h-[2px] w-[4px] bg-white" /><i className="h-[2px] w-[4px] bg-white" /><i className="h-[2px] w-[4px] bg-white" />
        </div>
        <div className="flex-1 overflow-hidden pt-[9px]">
          <Toolbar />
          <div className="border-t border-l border-[#161616]"><Scene /></div>
        </div>
      </div>
    </div>
  );
}

export default function App() {
  return (
    <div className="relative flex h-[1080px] w-[1920px] flex-col overflow-hidden bg-[#f2f1f0] font-['Noto_Sans','Open_Sans',sans-serif] text-[#3c3c3c]">
      <TopBar />
      <div className="flex min-h-0 flex-1">
        <Launcher />
        <main className="flex min-w-0 flex-1 flex-col">
          <MenuBar />
          <div className="flex min-h-0 flex-1">
            <PlotDock />
            <div className="flex w-[13px] flex-col items-end justify-center gap-[2px] pr-[2px]">
              <i className="h-px w-[3px] bg-[#a5a29e]" />
              <i className="h-px w-[3px] bg-[#a5a29e]" />
              <i className="h-px w-[3px] bg-[#a5a29e]" />
            </div>
            <Publisher />
          </div>
          <footer className="h-[22px] shrink-0 border-t border-[#d3d0cc]" />
        </main>
      </div>
      <GazeboWindow />
    </div>
  );
}
